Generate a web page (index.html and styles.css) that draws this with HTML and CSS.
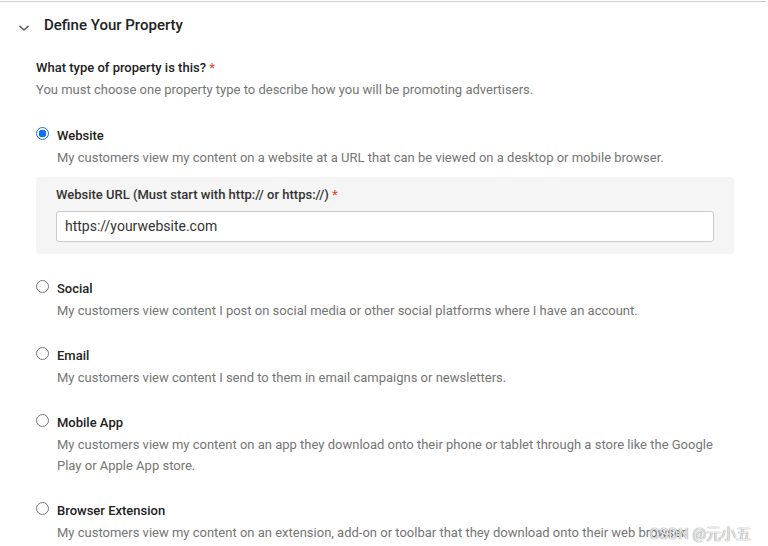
FILE: index.html
```
<!DOCTYPE html>
<html>
<head>
<meta charset="utf-8">
<link rel="stylesheet" href="styles.css">
</head>
<body>
<div class="panel">
  <div class="header">
    <svg class="chev" width="12" height="8" viewBox="0 0 12 8"><path d="M1.5 1.8 L6 6 L10.5 1.8" fill="none" stroke="#666" stroke-width="1.6"/></svg>
    <span class="title">Define Your Property</span>
  </div>
  <div class="content">
    <div class="question">What type of property is this? <span class="req">*</span></div>
    <div class="hint">You must choose one property type to describe how you will be promoting advertisers.</div>
    <div class="options">
      <div class="option">
        <div class="row"><span class="radio checked"></span><span class="label">Website</span></div>
        <div class="desc">My customers view my content on a website at a URL that can be viewed on a desktop or mobile browser.</div>
        <div class="urlbox">
          <div class="urllabel">Website URL (Must start with http:// or https://) <span class="req">*</span></div>
          <div class="input">https://yourwebsite.com</div>
        </div>
      </div>
      <div class="option">
        <div class="row"><span class="radio"></span><span class="label">Social</span></div>
        <div class="desc">My customers view content I post on social media or other social platforms where I have an account.</div>
      </div>
      <div class="option">
        <div class="row"><span class="radio"></span><span class="label">Email</span></div>
        <div class="desc">My customers view content I send to them in email campaigns or newsletters.</div>
      </div>
      <div class="option">
        <div class="row"><span class="radio"></span><span class="label">Mobile App</span></div>
        <div class="desc">My customers view my content on an app they download onto their phone or tablet through a store like the Google Play or Apple App store.</div>
      </div>
      <div class="option">
        <div class="row"><span class="radio"></span><span class="label">Browser Extension</span></div>
        <div class="desc">My customers view my content on an extension, add-on or toolbar that they download onto their web browser.</div>
      </div>
    </div>
  </div>
  <div class="watermark">CSDN @元小五</div>
</div>
</body>
</html>
```
FILE: styles.css
```
html, body {
  margin: 0;
  padding: 0;
  background: #fff;
  font-family: Roboto, "Noto Sans CJK SC", sans-serif;
  overflow: hidden;
}
.panel {
  position: relative;
  width: 766px;
  height: 545px;
  margin-top: 1px;
  border-top: 1px solid #cfcfcf;
  overflow: hidden;
}
.header {
  box-sizing: border-box;
  height: 47px;
  padding-top: 13px;
  display: flex;
  align-items: flex-start;
  padding-left: 18px;
}
.chev {
  margin-right: 14px;
  margin-top: 9px;
}
.title {
  font-size: 15px;
  font-weight: 500;
  line-height: 20px;
  color: #222;
}
.content {
  padding-left: 36px;
  width: 698px;
}
.question {
  margin-top: 9px;
  font-size: 13px;
  font-weight: 500;
  line-height: 20px;
  color: #222;
}
.req {
  color: #e4523b;
}
.hint {
  font-size: 13px;
  line-height: 24px;
  color: #757575;
}
.options {
  margin-top: 22px;
  display: flex;
  flex-direction: column;
  gap: 23px;
}
.row {
  display: flex;
  align-items: center;
  height: 22px;
}
.radio {
  box-sizing: border-box;
  width: 13px;
  height: 13px;
  border-radius: 50%;
  border: 1px solid #777;
  margin-right: 8px;
  margin-bottom: 4px;
  background: #fff;
}
.radio.checked {
  border: 1.5px solid #1570ef;
  background: radial-gradient(circle, #1570ef 0 3.6px, #fff 4.1px);
}
.label {
  font-size: 13px;
  font-weight: 500;
  color: #222;
}
.desc {
  padding-left: 21px;
  padding-top: 1px;
  font-size: 13px;
  line-height: 21px;
  color: #757575;
}
.urlbox {
  margin-top: 9px;
  background: #f5f5f5;
  border-radius: 3px;
  padding: 8px 20px 12px 20px;
}
.urllabel {
  font-size: 13px;
  font-weight: 500;
  line-height: 20px;
  color: #333;
  margin-bottom: 6px;
}
.input {
  box-sizing: border-box;
  height: 31px;
  background: #fff;
  border: 1px solid #cacaca;
  border-radius: 3px;
  padding-left: 8px;
  font-size: 14px;
  line-height: 29px;
  color: #333;
}
.watermark {
  position: absolute;
  right: 15px;
  bottom: 4px;
  font-size: 15px;
  color: rgba(255,255,255,0.85);
  text-shadow: 0 0 1px rgba(80,80,80,0.7), 0 0 1px rgba(80,80,80,0.5);
}
```
